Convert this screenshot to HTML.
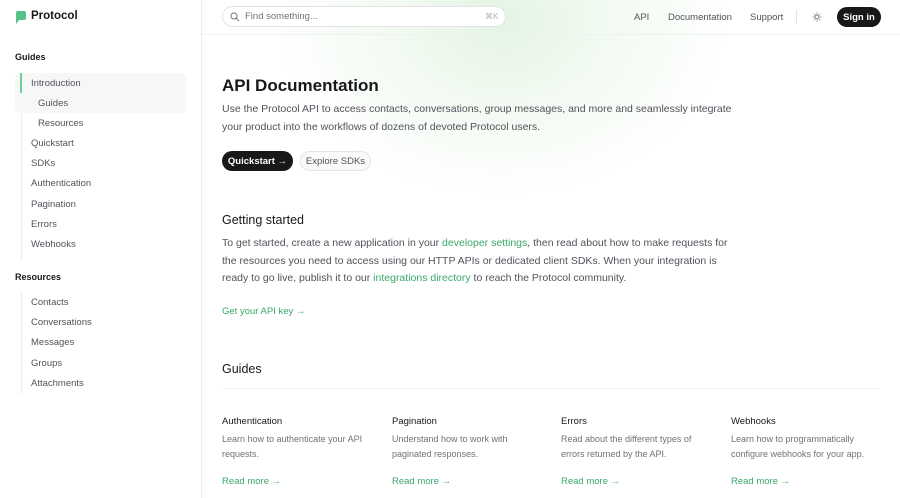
<!DOCTYPE html>
<html><head><meta charset="utf-8"><style>
*{margin:0;padding:0;box-sizing:border-box}
body{width:900px;height:498px;overflow:hidden;font-family:"Liberation Sans",sans-serif;background:#fff;position:relative;color:#18181b}
.abs{position:absolute;white-space:nowrap}
.side{position:absolute;left:0;top:0;width:202px;height:498px;border-right:1px solid #ececee;background:#fff}
.nav{font-size:9.5px;color:#52525b}
.g{color:#3aa86a}
.p{font-size:10.5px;color:#52525b;line-height:17.5px}
.c{font-size:9px;color:#71717a;line-height:15px}
.btn{display:flex;align-items:center;justify-content:center}
</style></head><body>
<div class="abs" style="left:202px;top:0;width:698px;height:260px;background:radial-gradient(ellipse 230px 180px at 300px 20px,#e3f4e3 0%,#f2faf1 45%,rgba(255,255,255,0) 100%)"></div>
<div class="abs" style="left:202px;top:34px;width:698px;height:1px;background:#eef2ee"></div>
<div class="side">
<svg class="abs" style="left:15px;top:11px" width="11" height="13" viewBox="0 0 11 13"><path d="M1 2a2 2 0 0 1 2-2h6a2 2 0 0 1 2 2v5a2 2 0 0 1-2 2H4L1 13z" fill="#55c184"/></svg>
<div class="abs" style="left:31px;top:10px;font-size:11.5px;font-weight:bold;color:#18181b">Protocol</div>
<div class="abs" style="left:15px;top:52px;font-size:9px;font-weight:bold;color:#18181b">Guides</div>
<div class="abs" style="left:21px;top:73px;width:1px;height:187px;background:#ececee"></div>
<div class="abs" style="left:15px;top:73px;width:171px;height:40px;background:#f7f7f8;border-radius:5px"></div>
<div class="abs" style="left:20px;top:73px;width:2px;height:20px;background:#6fcf97"></div>
<div class="abs nav" style="left:31px;top:78px">Introduction</div>
<div class="abs nav" style="left:38px;top:98px">Guides</div>
<div class="abs nav" style="left:38px;top:118px">Resources</div>
<div class="abs nav" style="left:31px;top:138px">Quickstart</div>
<div class="abs nav" style="left:31px;top:158px">SDKs</div>
<div class="abs nav" style="left:31px;top:178px">Authentication</div>
<div class="abs nav" style="left:31px;top:199px">Pagination</div>
<div class="abs nav" style="left:31px;top:219px">Errors</div>
<div class="abs nav" style="left:31px;top:239px">Webhooks</div>
<div class="abs" style="left:15px;top:272px;font-size:9px;font-weight:bold;color:#18181b">Resources</div>
<div class="abs" style="left:21px;top:292px;width:1px;height:102px;background:#ececee"></div>
<div class="abs nav" style="left:31px;top:297px">Contacts</div>
<div class="abs nav" style="left:31px;top:317px">Conversations</div>
<div class="abs nav" style="left:31px;top:337px">Messages</div>
<div class="abs nav" style="left:31px;top:358px">Groups</div>
<div class="abs nav" style="left:31px;top:378px">Attachments</div>
</div>
<div class="abs" style="left:222px;top:6px;width:284px;height:21px;border:1px solid #e4e4e7;border-radius:11px;background:#fff"></div>
<svg class="abs" style="left:230px;top:12px" width="10" height="10" viewBox="0 0 10 10"><circle cx="4" cy="4" r="3" fill="none" stroke="#71717a" stroke-width="1"/><path d="M6.3 6.3L9 9" stroke="#71717a"/></svg>
<div class="abs" style="left:245px;top:11px;font-size:9.5px;color:#71717a">Find something...</div>
<div class="abs" style="left:485px;top:12px;font-size:8px;color:#b4b4b8">⌘K</div>
<div class="abs" style="left:634px;top:12px;font-size:9.5px;color:#52525b">API</div>
<div class="abs" style="left:668px;top:12px;font-size:9.5px;color:#52525b">Documentation</div>
<div class="abs" style="left:750px;top:12px;font-size:9.5px;color:#52525b">Support</div>
<div class="abs" style="left:796px;top:10px;width:1px;height:14px;background:#e4e4e7"></div>
<svg class="abs" style="left:812px;top:12px" width="10" height="10" viewBox="0 0 10 10"><circle cx="5" cy="5" r="2" fill="none" stroke="#71717a"/><path d="M5 0.5v1.3M5 8.2v1.3M0.5 5h1.3M8.2 5h1.3M1.8 1.8l.9.9M7.3 7.3l.9.9M1.8 8.2l.9-.9M7.3 2.7l.9-.9" stroke="#71717a" stroke-width=".8"/></svg>
<div class="abs btn" style="left:837px;top:7px;width:44px;height:20px;border-radius:10px;background:#18181b;color:#fff;font-size:9.5px;font-weight:bold">Sign in</div>
<div class="abs" style="left:222px;top:76px;font-size:17px;font-weight:bold;color:#18181b">API Documentation</div>
<div class="abs p" style="left:222px;top:101px">Use the Protocol API to access contacts, conversations, group messages, and more and seamlessly integrate<br>your product into the workflows of dozens of devoted Protocol users.</div>
<div class="abs btn" style="left:222px;top:151px;width:71px;height:20px;border-radius:10px;background:#18181b;color:#fff;font-size:9.5px;font-weight:bold">Quickstart →</div>
<div class="abs btn" style="left:300px;top:151px;width:71px;height:20px;border-radius:10px;border:1px solid #e4e4e7;background:#fafafa;color:#52525b;font-size:9.5px">Explore SDKs</div>
<div class="abs" style="left:222px;top:213px;font-size:12.5px;color:#18181b">Getting started</div>
<div class="abs p" style="left:222px;top:235px">To get started, create a new application in your <span class="g">developer settings</span>, then read about how to make requests for<br>the resources you need to access using our HTTP APIs or dedicated client SDKs. When your integration is<br>ready to go live, publish it to our <span class="g">integrations directory</span> to reach the Protocol community.</div>
<div class="abs g" style="left:222px;top:306px;font-size:9.5px">Get your API key →</div>
<div class="abs" style="left:222px;top:362px;font-size:12.5px;color:#18181b">Guides</div>
<div class="abs" style="left:222px;top:388px;width:658px;height:1px;background:#f0f0f1"></div>
<div class="abs" style="left:222px;top:416px;font-size:9.5px;color:#18181b">Authentication</div>
<div class="abs c" style="left:222px;top:432px">Learn how to authenticate your API<br>requests.</div>
<div class="abs g" style="left:222px;top:476px;font-size:9.5px">Read more →</div>
<div class="abs" style="left:392px;top:416px;font-size:9.5px;color:#18181b">Pagination</div>
<div class="abs c" style="left:392px;top:432px">Understand how to work with<br>paginated responses.</div>
<div class="abs g" style="left:392px;top:476px;font-size:9.5px">Read more →</div>
<div class="abs" style="left:561px;top:416px;font-size:9.5px;color:#18181b">Errors</div>
<div class="abs c" style="left:561px;top:432px">Read about the different types of<br>errors returned by the API.</div>
<div class="abs g" style="left:561px;top:476px;font-size:9.5px">Read more →</div>
<div class="abs" style="left:731px;top:416px;font-size:9.5px;color:#18181b">Webhooks</div>
<div class="abs c" style="left:731px;top:432px">Learn how to programmatically<br>configure webhooks for your app.</div>
<div class="abs g" style="left:731px;top:476px;font-size:9.5px">Read more →</div>
</body></html>
